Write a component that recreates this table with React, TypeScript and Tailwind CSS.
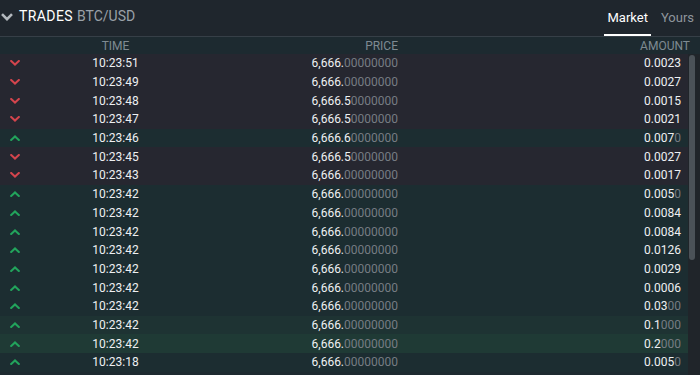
import React from 'react';

type Trade = {
    side: 'buy' | 'sell';
    time: string;
    price: [string, string];
    amount: [string, string];
    bg?: string;
};

const trades: Trade[] = [
    { side: 'sell', time: '10:23:51', price: ['6,666.', '00000000'], amount: ['0.0023', ''] },
    { side: 'sell', time: '10:23:49', price: ['6,666.', '00000000'], amount: ['0.0027', ''] },
    { side: 'sell', time: '10:23:48', price: ['6,666.5', '0000000'], amount: ['0.0015', ''] },
    { side: 'sell', time: '10:23:47', price: ['6,666.5', '0000000'], amount: ['0.0021', ''] },
    { side: 'buy', time: '10:23:46', price: ['6,666.6', '0000000'], amount: ['0.007', '0'] },
    { side: 'sell', time: '10:23:45', price: ['6,666.5', '0000000'], amount: ['0.0027', ''] },
    { side: 'sell', time: '10:23:43', price: ['6,666.', '00000000'], amount: ['0.0017', ''] },
    { side: 'buy', time: '10:23:42', price: ['6,666.', '00000000'], amount: ['0.005', '0'] },
    { side: 'buy', time: '10:23:42', price: ['6,666.', '00000000'], amount: ['0.0084', ''] },
    { side: 'buy', time: '10:23:42', price: ['6,666.', '00000000'], amount: ['0.0084', ''] },
    { side: 'buy', time: '10:23:42', price: ['6,666.', '00000000'], amount: ['0.0126', ''] },
    { side: 'buy', time: '10:23:42', price: ['6,666.', '00000000'], amount: ['0.0029', ''] },
    { side: 'buy', time: '10:23:42', price: ['6,666.', '00000000'], amount: ['0.0006', ''] },
    { side: 'buy', time: '10:23:42', price: ['6,666.', '00000000'], amount: ['0.03', '00'] },
    { side: 'buy', time: '10:23:42', price: ['6,666.', '00000000'], amount: ['0.1', '000'], bg: 'bg-[#1e3333]' },
    { side: 'buy', time: '10:23:42', price: ['6,666.', '00000000'], amount: ['0.2', '000'], bg: 'bg-[#1f3a35]' },
    { side: 'buy', time: '10:23:18', price: ['6,666.', '00000000'], amount: ['0.005', '0'] },
];

const Chevron = ({ up, className }: { up?: boolean; className: string }) => (
    <svg viewBox="0 0 10 6" className={className} fill="none" stroke="currentColor" strokeWidth={2} strokeLinecap="square">
        {up ? <polyline points="1.2,5 5,1.4 8.8,5" /> : <polyline points="1.2,1 5,4.6 8.8,1" />}
    </svg>
);

const App: React.FC = () => {
    return (
        <div className="w-[700px] h-[375px] overflow-hidden bg-[#1d2a30] text-[#eef0f2] flex flex-col" style={{ fontFamily: 'Roboto, "Liberation Sans", sans-serif' }}>
            {/* title bar */}
            <div className="h-[37px] shrink-0 flex items-stretch justify-between bg-[#1f262d] border-b border-[#363f47]">
                <div className="flex items-center pl-[1px] pb-[3px]">
                    <svg viewBox="0 0 12 8" className="w-[12px] h-[8px] text-[#b3b9be] mt-[1px]" fill="none" stroke="currentColor" strokeWidth={2.6}>
                        <polyline points="1,1.2 6,6.2 11,1.2" />
                    </svg>
                    <span className="ml-[6px] text-[14px] font-normal text-white tracking-[0.4px]">TRADES</span>
                    <span className="ml-[4px] text-[14px] text-[#9aa1a8]">BTC/USD</span>
                </div>
                <div className="flex items-stretch pr-[6px] text-[13px]">
                    <div className="flex items-center px-[3px] border-b-2 border-white text-white pt-[2px]">Market</div>
                    <div className="flex items-center ml-[10px] text-[#8e959c] pt-[2px] pb-[2px]">Yours</div>
                </div>
            </div>

            {/* column headers */}
            <div className="h-[17px] shrink-0 flex items-center text-[12px] text-[#7f8a92] leading-none">
                <div className="w-[30px]" />
                <div className="w-[171px] text-center">TIME</div>
                <div className="w-[197px] text-right">PRICE</div>
                <div className="flex-1 text-right pr-[10px]">AMOUNT</div>
            </div>

            {/* rows + scrollbar */}
            <div className="flex flex-1 min-h-0">
                <div className="flex-1 flex flex-col text-[12px]">
                    {trades.map((t, i) => (
                        <div
                            key={i}
                            className={`h-[18.7px] shrink-0 flex items-center ${t.bg ?? (t.side === 'sell' ? 'bg-[#262730]' : 'bg-[#1c2d31]')}`}
                        >
                            <div className="w-[30px] pl-[10px] flex items-center">
                                {t.side === 'sell'
                                    ? <Chevron className="w-[10px] h-[6px] text-[#d4454d]" />
                                    : <Chevron up className="w-[10px] h-[6px] text-[#22a45c]" />}
                            </div>
                            <div className="w-[171px] text-center">{t.time}</div>
                            <div className="w-[197px] text-right">
                                {t.price[0]}<span className="text-[#767c83]">{t.price[1]}</span>
                            </div>
                            <div className="flex-1 text-right pr-[7px]">
                                {t.amount[0]}<span className="text-[#767c83]">{t.amount[1]}</span>
                            </div>
                        </div>
                    ))}
                </div>
                <div className="w-[12px] shrink-0 bg-[#20252a] pl-[1px] pt-[1px]">
                    <div className="w-[6px] h-[205px] rounded-full bg-[#4b5258]" />
                </div>
            </div>
        </div>
    );
};

export default App;
